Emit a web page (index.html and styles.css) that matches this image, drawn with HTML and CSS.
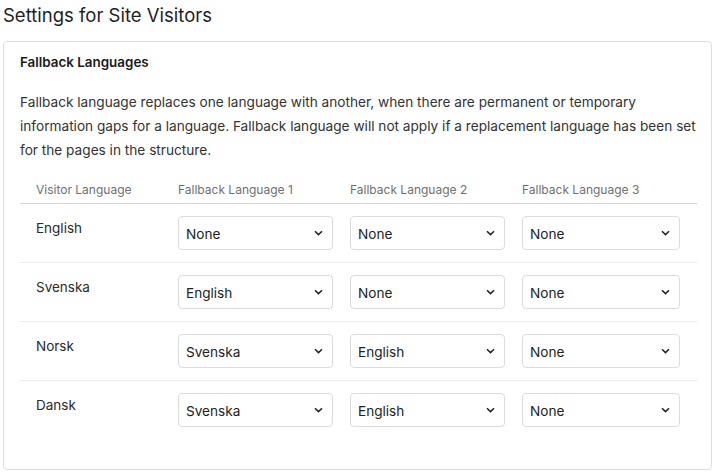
FILE: index.html
```html
<!DOCTYPE html>
<html lang="en">
<head>
<meta charset="utf-8">
<title>Settings for Site Visitors</title>
<link rel="stylesheet" href="styles.css">
</head>
<body>
<div class="page">
  <h1 class="title">Settings for Site Visitors</h1>
  <section class="card">
    <h2 class="card-title">Fallback Languages</h2>
    <p class="desc">Fallback language replaces one language with another, when there are permanent or temporary information gaps for a language. Fallback language will not apply if a replacement language has been set for the pages in the structure.</p>
    <div class="table">
      <div class="row head">
        <div class="cell visitor">Visitor Language</div>
        <div class="cell">Fallback Language 1</div>
        <div class="cell">Fallback Language 2</div>
        <div class="cell">Fallback Language 3</div>
      </div>
      <div class="row">
        <div class="cell visitor lang">English</div>
        <div class="select"><span>None</span><svg class="chev" width="9" height="6" viewBox="0 0 9 6"><path d="M1 1.2 L4.5 4.6 L8 1.2" fill="none" stroke="#222" stroke-width="1.5"/></svg></div>
        <div class="select"><span>None</span><svg class="chev" width="9" height="6" viewBox="0 0 9 6"><path d="M1 1.2 L4.5 4.6 L8 1.2" fill="none" stroke="#222" stroke-width="1.5"/></svg></div>
        <div class="select"><span>None</span><svg class="chev" width="9" height="6" viewBox="0 0 9 6"><path d="M1 1.2 L4.5 4.6 L8 1.2" fill="none" stroke="#222" stroke-width="1.5"/></svg></div>
      </div>
      <div class="row">
        <div class="cell visitor lang">Svenska</div>
        <div class="select"><span>English</span><svg class="chev" width="9" height="6" viewBox="0 0 9 6"><path d="M1 1.2 L4.5 4.6 L8 1.2" fill="none" stroke="#222" stroke-width="1.5"/></svg></div>
        <div class="select"><span>None</span><svg class="chev" width="9" height="6" viewBox="0 0 9 6"><path d="M1 1.2 L4.5 4.6 L8 1.2" fill="none" stroke="#222" stroke-width="1.5"/></svg></div>
        <div class="select"><span>None</span><svg class="chev" width="9" height="6" viewBox="0 0 9 6"><path d="M1 1.2 L4.5 4.6 L8 1.2" fill="none" stroke="#222" stroke-width="1.5"/></svg></div>
      </div>
      <div class="row">
        <div class="cell visitor lang">Norsk</div>
        <div class="select"><span>Svenska</span><svg class="chev" width="9" height="6" viewBox="0 0 9 6"><path d="M1 1.2 L4.5 4.6 L8 1.2" fill="none" stroke="#222" stroke-width="1.5"/></svg></div>
        <div class="select"><span>English</span><svg class="chev" width="9" height="6" viewBox="0 0 9 6"><path d="M1 1.2 L4.5 4.6 L8 1.2" fill="none" stroke="#222" stroke-width="1.5"/></svg></div>
        <div class="select"><span>None</span><svg class="chev" width="9" height="6" viewBox="0 0 9 6"><path d="M1 1.2 L4.5 4.6 L8 1.2" fill="none" stroke="#222" stroke-width="1.5"/></svg></div>
      </div>
      <div class="row last">
        <div class="cell visitor lang">Dansk</div>
        <div class="select"><span>Svenska</span><svg class="chev" width="9" height="6" viewBox="0 0 9 6"><path d="M1 1.2 L4.5 4.6 L8 1.2" fill="none" stroke="#222" stroke-width="1.5"/></svg></div>
        <div class="select"><span>English</span><svg class="chev" width="9" height="6" viewBox="0 0 9 6"><path d="M1 1.2 L4.5 4.6 L8 1.2" fill="none" stroke="#222" stroke-width="1.5"/></svg></div>
        <div class="select"><span>None</span><svg class="chev" width="9" height="6" viewBox="0 0 9 6"><path d="M1 1.2 L4.5 4.6 L8 1.2" fill="none" stroke="#222" stroke-width="1.5"/></svg></div>
      </div>
    </div>
  </section>
</div>
</body>
</html>
```
FILE: styles.css
```css
* { box-sizing: border-box; }
html, body { margin: 0; padding: 0; background: #fff; }
body {
  font-family: Inter, "Noto Sans", "Liberation Sans", sans-serif;
  color: #2a2a2a;
}
.page {
  padding: 0 3px;
}
.title {
  margin: 3px 0 14px;
  font-size: 18.5px;
  line-height: 24px;
  font-weight: 400;
  color: #1f1f1f;
}
.card {
  border: 1px solid #dedede;
  border-radius: 4px;
  padding: 10px 14px 30px 16px;
}
.card-title {
  margin: 0;
  font-size: 13.4px;
  line-height: 20px;
  font-weight: 600;
  color: #1a1a1a;
}
.desc {
  margin: 18px 0 19px;
  font-size: 13.65px;
  line-height: 24px;
  color: #333;
}
.row {
  display: grid;
  grid-template-columns: 141px 155px 155px 158px;
  column-gap: 17px;
  align-items: start;
  padding: 12px 0;
  border-bottom: 1px solid #ececec;
}
.row.head {
  padding: 0 0 4px;
  border-bottom: 1px solid #d6d6d6;
}
.row.last { border-bottom: none; }
.head .cell {
  font-size: 12px;
  line-height: 18px;
  color: #6f6f6f;
}
.visitor { padding-left: 16px; }
.lang {
  padding-top: 2px;
  font-size: 13.5px;
  line-height: 20px;
  color: #2a2a2a;
}
.select {
  height: 34px;
  border: 1px solid #dcdcdc;
  border-radius: 4px;
  display: flex;
  align-items: center;
  justify-content: space-between;
  padding: 0 9px 0 7px;
  font-size: 13.6px;
  color: #222;
  background: #fff;
}
.select span { padding-top: 1px; }
.chev { display: block; }
```
